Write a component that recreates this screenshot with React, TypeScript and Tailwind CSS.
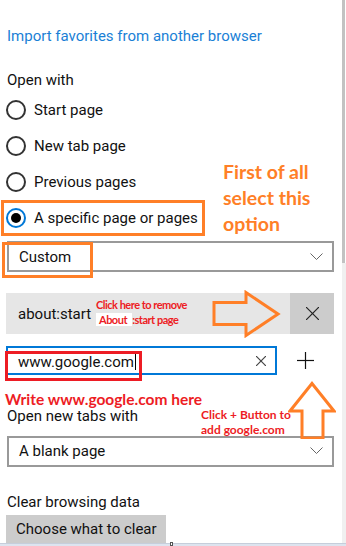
const ui = "font-['Segoe_UI','Roboto',sans-serif] text-[15px] leading-[20px] text-[#111]"
const note = "font-['Lato',sans-serif] font-bold"

function Radio({ label, checked = false }: { label: string; checked?: boolean }) {
  return (
    <div className="flex h-[36px] items-center gap-[8px]">
      <div
        className={
          checked
            ? "flex h-[20px] w-[20px] items-center justify-center rounded-full border-2 border-[#0078d7]"
            : "h-[20px] w-[20px] rounded-full border-2 border-[#333]"
        }
      >
        {checked && <div className="h-[10px] w-[10px] rounded-full bg-black" />}
      </div>
      <span>{label}</span>
    </div>
  )
}

function Chevron() {
  return (
    <svg width="13" height="8" viewBox="0 0 13 8" className="mr-[9px]">
      <polyline points="0.5,0.5 6.5,6.5 12.5,0.5" fill="none" stroke="#666" strokeWidth="1" />
    </svg>
  )
}

function Select({ value }: { value: string }) {
  return (
    <div className="flex h-[31px] items-center justify-between border-2 border-[#999] pl-[10px]">
      <span>{value}</span>
      <Chevron />
    </div>
  )
}

function Cross({ size, color }: { size: number; color: string }) {
  return (
    <svg width={size} height={size} viewBox={`0 0 ${size} ${size}`}>
      <line x1="0" y1="0" x2={size} y2={size} stroke={color} strokeWidth="1.2" />
      <line x1={size} y1="0" x2="0" y2={size} stroke={color} strokeWidth="1.2" />
    </svg>
  )
}

export default function App() {
  return (
    <div className={`relative flex h-[546px] w-[346px] flex-col overflow-hidden bg-white ${ui}`}>
      <div className="flex flex-1 overflow-hidden">
        <main className="flex w-[342px] flex-col pl-[6px] pr-[8px]">
          <p className="ml-[1px] mt-[26px] text-[#1a7fd6]">Import favorites from another browser</p>

          <p className="ml-[1px] mt-[24px]">Open with</p>
          <div className="mt-[2px] flex flex-col">
            <Radio label="Start page" />
            <Radio label="New tab page" />
            <Radio label="Previous pages" />
            <Radio label="A specific page or pages" checked />
          </div>

          <div className="ml-[1px] mt-[5px]">
            <Select value="Custom" />
          </div>

          <div className="mt-[21px] flex h-[44px] items-center bg-[#e6e6e6]">
            <span className="flex-1 pl-[12px]">about:start</span>
            <button className="flex h-full w-[44px] items-center justify-center bg-[#cccccc]">
              <Cross size={13} color="#222" />
            </button>
          </div>

          <div className="mt-[12px] flex h-[30px] items-center">
            <div className="flex h-full w-[271px] items-center border-2 border-[#0078d7] pl-[10px] pr-[9px]">
              <span className="flex-1">
                www.google.com<span className="ml-[1px] inline-block h-[17px] w-px translate-y-[3px] bg-black" />
              </span>
              <Cross size={10} color="#444" />
            </div>
            <div className="flex flex-1 items-center justify-center">
              <svg width="17" height="17" viewBox="0 0 17 17">
                <line x1="8.5" y1="0" x2="8.5" y2="17" stroke="#111" strokeWidth="1.2" />
                <line x1="0" y1="8.5" x2="17" y2="8.5" stroke="#111" strokeWidth="1.2" />
              </svg>
            </div>
          </div>

          <p className="ml-[1px] mt-[31px]">Open new tabs with</p>
          <div className="ml-[1px] mt-[10px]">
            <Select value="A blank page" />
          </div>

          <p className="ml-[1px] mt-[25px]">Clear browsing data</p>
          <button className="mt-[3px] h-[30px] w-[160px] bg-[#cccccc] pl-[10px] text-left">Choose what to clear</button>
        </main>

        <div className="flex w-[4px] flex-col">
          <div className="h-[263px] w-[3px] bg-[#c2c2c2]" />
          <div className="flex-1 bg-[#f0f0f0]" />
        </div>
      </div>

      <div className="relative h-[3px] border-t border-[#c6cedb] bg-[#dde4ef]">
        <div className="absolute left-[170px] top-[-2px] h-[4px] w-[3px] border border-[#555] bg-white" />
      </div>

      {/* annotations */}
      <div className="pointer-events-none absolute left-[1px] top-[200px] h-[36px] w-[204px] border-[3px] border-[#ff7f27]" />
      <div className="pointer-events-none absolute left-[2px] top-[242px] h-[36px] w-[91px] border-[3px] border-[#ff7f27]" />

      <div className={`absolute left-[223px] top-[159px] text-[19.5px] leading-[26px] text-[#ff7f27] ${note}`}>
        <p>First of all</p>
        <p>select this</p>
        <p>option</p>
      </div>

      <div className={`absolute left-[96px] top-[297px] text-[11px] leading-[15px] tracking-[-0.5px] text-[#ed1c24] ${note}`}>
        <p>Click here to remove</p>
        <p>
          <span className="bg-white px-[3px]">About </span>:start page
        </p>
      </div>

      <svg className="absolute left-[212px] top-[290px]" width="70" height="48" viewBox="0 0 70 48">
        <polygon
          points="2,12.5 34,12.5 34,2.5 66,24 34,45.5 34,34.5 2,34.5"
          fill="none"
          stroke="#ff7f27"
          strokeWidth="3"
        />
      </svg>

      <div className={`absolute left-[5px] top-[389px] text-[15.5px] leading-[20px] text-[#ed1c24] ${note}`}>
        Write www.google.com here
      </div>

      <svg className="absolute left-[288px] top-[381px]" width="48" height="58" viewBox="0 0 48 58">
        <polygon
          points="24,2.5 46,30 35,30 35,57 14,57 14,30 2,30"
          fill="none"
          stroke="#ff7f27"
          strokeWidth="3"
        />
      </svg>

      <div className={`absolute left-[201px] top-[407px] text-[12px] leading-[15px] text-[#ed1c24] ${note}`}>
        <p>Click + Button to</p>
        <p>add google.com</p>
      </div>

      <div className="pointer-events-none absolute left-[5px] top-[351px] h-[30px] w-[137px] border-[3px] border-[#ed1c24]" />
    </div>
  )
}
